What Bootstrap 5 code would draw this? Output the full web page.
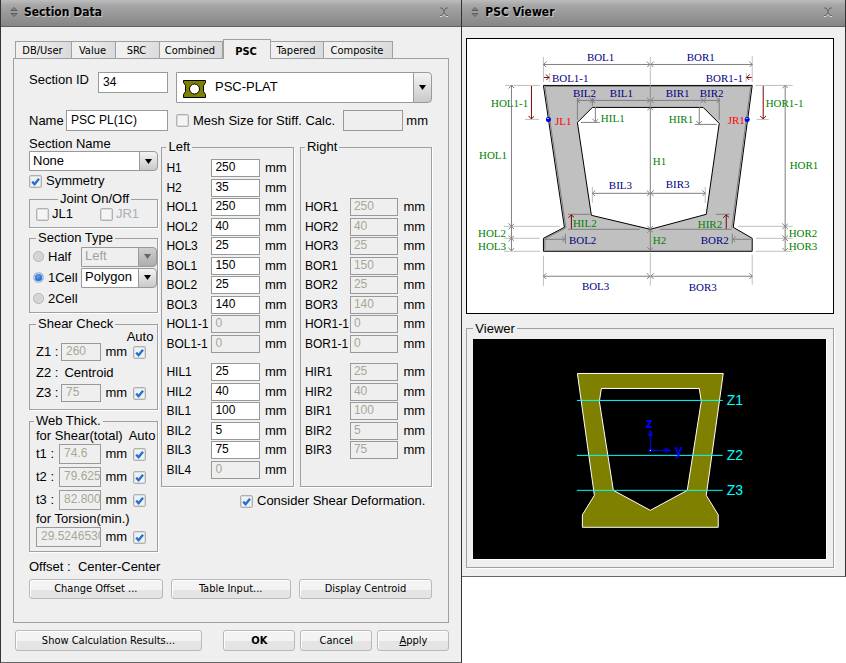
<!DOCTYPE html>
<html lang="en">
<head>
<meta charset="utf-8">
<meta name="viewport" content="width=device-width, initial-scale=1">
<title>Section Data</title>
<link href="https://cdn.jsdelivr.net/npm/bootstrap@5.3.0/dist/css/bootstrap.min.css" rel="stylesheet">
<style>
  :root { --face: #efefef; --edge: #a0a0a0; }
  body { font: 13px/16px "Liberation Sans", Arial, sans-serif; color: #000; background: #fff; }
  .win { background: var(--face); border: 1px solid #333; border-top: 0; min-width: 0; }
  .win-data { flex: 462 1 0; border-bottom-color: #666; }
  .win-view { flex: 384 1 0; border-left: 0; border-bottom-color: #666; }
  .titlebar { height: 27px; padding: 0 12px 3px 8px; border-bottom: 1px solid #606060;
    background: linear-gradient(#bdbdbd 0, #a6a6a6 20%, #9a9a9a 50%, #858585 100%); }
  .titlebar h1 { font: bold 12px/16px "DejaVu Sans Condensed", "DejaVu Sans", Tahoma, sans-serif; margin: 0 0 0 5px; text-shadow: 1px 1px 0 #ccc; }
  .titlebar button { border: 0; background: none; padding: 0; line-height: 0; }

  .ui, .nav-tabs .nav-link { font: 11px/14px "DejaVu Sans Condensed", "DejaVu Sans", Tahoma, sans-serif; color: #000; }
  .nav-tabs { border: 0; padding-left: 2px; }
  .nav-tabs .nav-link { height: 17px; padding: 1px 2px 0 0; border: 1px solid var(--edge); border-left-width: 0; border-bottom: 0; border-radius: 0;
    background: linear-gradient(100deg, #f0f0f0 30%, #d8d9db); margin: 0; white-space: nowrap; }
  .nav-tabs .nav-item:first-child .nav-link { border-left-width: 1px; }
  .nav-tabs .nav-link.active { height: 20px; margin-bottom: -1px; border: 1px solid var(--edge); border-bottom: 0; background: var(--face); color: #000; font-weight: bold; padding-top: 4px; position: relative; }
  .t1 { width: 57px; } .t2 { width: 44px; } .t3 { width: 63px; } .t4 { width: 48px; } .t5 { width: 53px; } .t6 { width: 69px; }
  .panel { border: 1px solid var(--edge); padding: 13px 16px 23px 15px; }

  .box { height: 20px; padding: 0 0 2px 4px; border: 1px solid #999; outline: 0;
    border-radius: 0; background: #fff; color: #000; font-size: 12px; line-height: 14px; min-width: 0; width: 100%; }
  .box:disabled { background: var(--face); color: #a8a797; }
  .tall { height: 21px; }
  .dd { appearance: none; height: 20px; border: 1px solid #999; border-radius: 0 4px 4px 0; padding: 0 20px 1px 3px; color: #000; font-size: 13px; line-height: 16px; width: 100%;
    background: url("data:image/svg+xml,%3Csvg xmlns='http://www.w3.org/2000/svg' width='18' height='7'%3E%3Cpath d='M6 1h7l-3.500 5z'/%3E%3C/svg%3E") right center / 18px 7px no-repeat,
      linear-gradient(#999, #999) right 17px top / 1px 100% no-repeat,
      linear-gradient(#f4f4f4, #c9c9c9) right / 17px 100% no-repeat, #fff; }
  .dd:disabled { color: #a0a0a0; opacity: 1;
    background: url("data:image/svg+xml,%3Csvg xmlns='http://www.w3.org/2000/svg' width='18' height='7'%3E%3Cpath d='M6 1h7l-3.500 5z' fill='%23666'/%3E%3C/svg%3E") right center / 18px 7px no-repeat,
      linear-gradient(#999, #999) right 17px top / 1px 100% no-repeat,
      linear-gradient(#cfcfcf, #adadad) right / 17px 100% no-repeat, var(--face); }
  .dd-big { height: 31px; padding-left: 38px; }
  .shape-icon { left: 7px; top: 8px; pointer-events: none; }

  .ck { appearance: none; width: 13px; height: 13px; margin: 0; flex: none; border: 1px solid #b0b0b0; border-radius: 2px; background: #f4f4f4; box-shadow: inset 0 0 0 1px #dcdcdc; }
  .ck:checked { background: #eef3fa url("data:image/svg+xml,%3Csvg xmlns='http://www.w3.org/2000/svg' viewBox='0 0 11 11'%3E%3Cpath d='M2.200 5.600l2.400 2.600 4.400-5.400' fill='none' stroke='%232a6fcb' stroke-width='2.400'/%3E%3C/svg%3E") center / 11px 11px no-repeat; }
  .ck[type=radio] { width: 11px; height: 11px; border-radius: 50%; background: #d4d4d4; }
  .ck[type=radio]:checked { background: radial-gradient(circle at 45% 40%, #64a5ee, #1c63c4 60%); border-color: #a9bdd6; box-shadow: inset 0 0 0 1px #cfdff3; }

  fieldset { border: 1px solid var(--edge); box-shadow: 1px 1px 0 #fff; padding: 0 4px; }
  legend { float: none; width: auto; margin: 0; padding: 0 2px; font-size: 13px; line-height: 14px; }

  .col-top { width: 139px; flex: none; }
  .lab-id { width: 69px; flex: none; white-space: nowrap; } .lab-nm { width: 37px; flex: none; }
  .shape { margin-left: 8px; min-width: 0; }
  .row-name { margin-top: 7px; margin-bottom: 5px; }
  .mesh-box { width: 60px; flex: none; } .mesh-unit { width: 29px; padding-left: 3px; }

  .cols { gap: 3px; } .lh-sname { line-height: 15px; }
  .col-a { flex: 129 1 0; min-width: 0; } .col-b { flex: 270 1 0; min-width: 0; }
  .sym { margin: 2px 0 3px; }
  .joint { padding-bottom: 5px; margin-bottom: 3px; } .joint legend { margin-left: 24px; }
  .joint-line { height: 16px; padding-left: 2px; } .joint-line label { margin-left: 3px; } .ck.jr { margin-left: 27px; } .dim { color: #a9b0b8; }
  .stype { padding: 1px 0 3px 3px; margin-bottom: 4px; } .stype legend { margin-left: 3px; }
  .stype .line { height: 21px; }
  .stype .rl { width: 37px; flex: none; padding-left: 4px; white-space: nowrap; }
  .shear { padding: 0 11px 7px 6px; margin-bottom: 4px; } .web { padding: 0 11px 4px 6px; }
  .web legend { margin-left: -2px; }
  .key { width: 25px; flex: none; } .key-t { width: 23px; flex: none; }
  .unit { width: 32px; flex: none; padding-left: 4px; }
  .h18 { height: 18px; } .auto { line-height: 12px; margin-right: -7px; }
  .z2 { line-height: 19px; margin: 2px 0; } .cen { margin-left: 6px; }
  .shear-head { margin-right: -9px; }
  .thick { gap: 3px; }
  .tor-label { margin-top: 1px; }

  .pair { gap: 6px; padding-top: 4px; } .side { flex: 1 1 0; padding: 5px 0 7px 4px; }
  .dims { display: grid; grid-template-columns: 45px 1fr 33px; grid-template-rows: repeat(10, 1fr) 8px repeat(6, 1fr); row-gap: 1px; min-height: 320px; align-items: center; }
  .dims label { font-size: 12px; white-space: nowrap; }
  .dims .box { height: 18px; padding-left: 3px; } .dims span { padding-left: 5px; }
  .dims .skip2 { grid-row: 1 / 3; grid-column: 1 / -1; } .dims .skip { grid-column: 1 / -1; }
  .consider { margin: 6px 7px 0 0; }
  .offset-line { margin-top: 7px; }

  .btn-x { height: 20px; padding: 0; border: 1px solid #b9b9b9; border-radius: 3px; box-shadow: inset 1px 1px 0 #fff; background: linear-gradient(#f3f3f3 0 55%, #e4e4e4 55% 100%); }
  .w1 { flex: 135 1 0; } .w2 { flex: 121 1 0; }
  .foot { gap: 5px; padding: 7px 0 11px 2px; } .f1 { flex: 187 1 0; max-width: 187px; } .f2 { width: 72px; }
  .foot .btn-x { height: 21px; }

  .view-body { padding: 11px 11px 8px 4px; }
  .view-set { margin-top: 8px; padding: 3px 6px 7px; }
  .drawing { border: 1px solid #000; background: #fff; }
  .drawing svg, .scene svg { display: block; width: 100%; height: auto; }
  .drawing text { font: 11px "Liberation Serif", serif; }
  .scene { background: #000; border: 1px solid #fff; border-width: 0 1px 1px 0; }
</style>
<script src="https://cdn.jsdelivr.net/npm/bootstrap@5.3.0/dist/js/bootstrap.bundle.min.js" defer></script>
</head>
<body>
<main class="d-flex align-items-start">

<section class="win win-data" aria-label="Section Data">
  <header class="titlebar d-flex align-items-center">
    <svg width="10" height="12" viewBox="0 0 10 12" aria-hidden="true"><path d="M2 4.500L5 1.500l3 3zM2 7.500l3 3 3-3z" fill="#888" stroke="#5c5c5c"/></svg>
    <h1>Section Data</h1>
    <button class="ms-auto" type="button" aria-label="Close"><svg width="10" height="10" viewBox="0 0 10 10"><path d="M1 9.500h2l2-2 2 2h2" stroke="#ddd" fill="none"/><path d="M1 1h2l2 3 2-3h2M1 8.500h2l2-3 2 3h2M5 4v2" stroke="#666" fill="none"/></svg></button>
  </header>
  <div class="px-2 mx-1">
    <ul class="nav nav-tabs flex-nowrap align-items-end pt-2 mt-1" role="tablist">
      <li class="nav-item"><button class="nav-link t1" type="button" role="tab">DB/User</button></li>
      <li class="nav-item"><button class="nav-link t2" type="button" role="tab">Value</button></li>
      <li class="nav-item"><button class="nav-link t2" type="button" role="tab">SRC</button></li>
      <li class="nav-item"><button class="nav-link t3" type="button" role="tab">Combined</button></li>
      <li class="nav-item"><button class="nav-link t4 active" type="button" role="tab" aria-selected="true">PSC</button></li>
      <li class="nav-item"><button class="nav-link t5" type="button" role="tab">Tapered</button></li>
      <li class="nav-item"><button class="nav-link t6" type="button" role="tab">Composite</button></li>
    </ul>
    <div class="panel">
      <div class="d-flex">
        <div class="d-flex col-top">
          <label for="sid" class="lab-id">Section ID</label><input id="sid" class="box tall" value="34">
        </div>
        <div class="position-relative flex-grow-1 shape">
          <svg class="shape-icon position-absolute" width="23" height="18" viewBox="0 0 23 18" aria-hidden="true"><path d="M.5.5h22v2l-2 3v6l2 3v3H.5v-3l2-3v-6l-2-3z" fill="#808000" stroke="#000"/><circle cx="11.500" cy="9" r="5" fill="#fff" stroke="#000"/></svg>
          <select class="dd dd-big" aria-label="Section shape"><option>PSC-PLAT</option></select>
        </div>
      </div>
      <div class="d-flex row-name align-items-center">
        <div class="d-flex col-top align-items-center"><label for="nm" class="lab-nm">Name</label><input id="nm" class="box tall" value="PSC PL(1C)"></div>
        <div class="shape d-flex align-items-center flex-grow-1">
          <input type="checkbox" class="ck" id="mesh"><label for="mesh" class="ms-1 text-nowrap">Mesh Size for Stiff. Calc.</label>
          <input class="box tall mesh-box ms-auto" aria-label="Mesh size" disabled><span class="mesh-unit">mm</span>
        </div>
      </div>

      <div class="d-flex cols">
        <div class="col-a">
          <label for="sname" class="d-block lh-sname">Section Name</label>
          <select id="sname" class="dd d-block"><option>None</option></select>
          <div class="d-flex align-items-center sym"><input type="checkbox" class="ck" id="sym" checked><label for="sym" class="ms-1">Symmetry</label></div>
          <fieldset class="joint"><legend>Joint On/Off</legend>
            <div class="d-flex align-items-center joint-line">
              <input type="checkbox" class="ck" id="jl"><label for="jl">JL1</label>
              <input type="checkbox" class="ck jr" id="jr" disabled><label for="jr" class="dim">JR1</label>
            </div>
          </fieldset>
          <fieldset class="stype"><legend>Section Type</legend>
            <div class="line d-flex align-items-center"><input type="radio" name="st" class="ck" id="half"><label for="half" class="rl">Half</label><select class="dd" aria-label="Half side" disabled><option>Left</option></select></div>
            <div class="line d-flex align-items-center"><input type="radio" name="st" class="ck" id="c1" checked><label for="c1" class="rl">1Cell</label><select class="dd" aria-label="Cell shape"><option>Polygon</option></select></div>
            <div class="line d-flex align-items-center"><input type="radio" name="st" class="ck" id="c2"><label for="c2" class="rl">2Cell</label></div>
          </fieldset>
          <fieldset class="shear"><legend>Shear Check</legend>
            <div class="text-end auto">Auto</div>
            <div class="d-flex align-items-center"><label for="z1" class="key">Z1 :</label><input id="z1" class="box h18" value="260" disabled><span class="unit">mm</span><input type="checkbox" class="ck" aria-label="Z1 auto" checked></div>
            <div class="z2"><span>Z2 :</span><span class="cen">Centroid</span></div>
            <div class="d-flex align-items-center"><label for="z3" class="key">Z3 :</label><input id="z3" class="box h18" value="75" disabled><span class="unit">mm</span><input type="checkbox" class="ck" aria-label="Z3 auto" checked></div>
          </fieldset>
          <fieldset class="web"><legend>Web Thick.</legend>
            <div class="d-flex justify-content-between shear-head"><span class="text-nowrap">for Shear(total)</span><span>Auto</span></div>
            <div class="d-grid thick">
              <div class="d-flex align-items-center"><label for="w1" class="key-t">t1 :</label><input id="w1" class="box" value="74.6" disabled><span class="unit">mm</span><input type="checkbox" class="ck" aria-label="t1 auto" checked></div>
              <div class="d-flex align-items-center"><label for="w2" class="key-t">t2 :</label><input id="w2" class="box" value="79.625" disabled><span class="unit">mm</span><input type="checkbox" class="ck" aria-label="t2 auto" checked></div>
              <div class="d-flex align-items-center"><label for="w3" class="key-t">t3 :</label><input id="w3" class="box" value="82.8000" disabled><span class="unit">mm</span><input type="checkbox" class="ck" aria-label="t3 auto" checked></div>
            </div>
            <label for="tor" class="d-block text-nowrap tor-label">for Torsion(min.)</label>
            <div class="d-flex align-items-center"><input id="tor" class="box" value="29.5246530" disabled><span class="unit">mm</span><input type="checkbox" class="ck" aria-label="Torsion auto" checked></div>
          </fieldset>
        </div>

        <div class="col-b">
          <div class="d-flex pair">
            <fieldset class="side"><legend>Left</legend>
              <div class="dims">
                <label for="a1">H1</label><input id="a1" class="box" value="250"><span>mm</span>
                <label for="a2">H2</label><input id="a2" class="box" value="35"><span>mm</span>
                <label for="a3">HOL1</label><input id="a3" class="box" value="250"><span>mm</span>
                <label for="a4">HOL2</label><input id="a4" class="box" value="40"><span>mm</span>
                <label for="a5">HOL3</label><input id="a5" class="box" value="25"><span>mm</span>
                <label for="a6">BOL1</label><input id="a6" class="box" value="150"><span>mm</span>
                <label for="a7">BOL2</label><input id="a7" class="box" value="25"><span>mm</span>
                <label for="a8">BOL3</label><input id="a8" class="box" value="140"><span>mm</span>
                <label for="a9">HOL1-1</label><input id="a9" class="box" value="0" disabled><span>mm</span>
                <label for="a10">BOL1-1</label><input id="a10" class="box" value="0" disabled><span>mm</span>
                <div class="skip"></div>
                <label for="a11">HIL1</label><input id="a11" class="box" value="25"><span>mm</span>
                <label for="a12">HIL2</label><input id="a12" class="box" value="40"><span>mm</span>
                <label for="a13">BIL1</label><input id="a13" class="box" value="100"><span>mm</span>
                <label for="a14">BIL2</label><input id="a14" class="box" value="5"><span>mm</span>
                <label for="a15">BIL3</label><input id="a15" class="box" value="75"><span>mm</span>
                <label for="a16">BIL4</label><input id="a16" class="box" value="0" disabled><span>mm</span>
              </div>
            </fieldset>
            <fieldset class="side"><legend>Right</legend>
              <div class="dims">
                <div class="skip2"></div>
                <label for="b3">HOR1</label><input id="b3" class="box" value="250" disabled><span>mm</span>
                <label for="b4">HOR2</label><input id="b4" class="box" value="40" disabled><span>mm</span>
                <label for="b5">HOR3</label><input id="b5" class="box" value="25" disabled><span>mm</span>
                <label for="b6">BOR1</label><input id="b6" class="box" value="150" disabled><span>mm</span>
                <label for="b7">BOR2</label><input id="b7" class="box" value="25" disabled><span>mm</span>
                <label for="b8">BOR3</label><input id="b8" class="box" value="140" disabled><span>mm</span>
                <label for="b9">HOR1-1</label><input id="b9" class="box" value="0" disabled><span>mm</span>
                <label for="b10">BOR1-1</label><input id="b10" class="box" value="0" disabled><span>mm</span>
                <div class="skip"></div>
                <label for="b11">HIR1</label><input id="b11" class="box" value="25" disabled><span>mm</span>
                <label for="b12">HIR2</label><input id="b12" class="box" value="40" disabled><span>mm</span>
                <label for="b13">BIR1</label><input id="b13" class="box" value="100" disabled><span>mm</span>
                <label for="b14">BIR2</label><input id="b14" class="box" value="5" disabled><span>mm</span>
                <label for="b15">BIR3</label><input id="b15" class="box" value="75" disabled><span>mm</span>
              </div>
            </fieldset>
          </div>
          <div class="d-flex align-items-center justify-content-end consider"><input type="checkbox" class="ck" id="csd" checked><label for="csd" class="ms-1">Consider Shear Deformation.</label></div>
        </div>
      </div>

      <div class="offset-line">Offset :&nbsp; Center-Center</div>
      <div class="d-flex gap-2 mt-1">
        <button type="button" class="btn-x ui w1">Change Offset ...</button>
        <button type="button" class="btn-x ui w2">Table Input...</button>
        <button type="button" class="btn-x ui w1">Display Centroid</button>
      </div>
    </div>
    <div class="foot d-flex">
      <button type="button" class="btn-x ui f1">Show Calculation Results...</button>
      <button type="button" class="btn-x ui f2 fw-bold ms-auto">OK</button>
      <button type="button" class="btn-x ui f2">Cancel</button>
      <button type="button" class="btn-x ui f2"><u>A</u>pply</button>
    </div>
  </div>
</section>

<section class="win win-view" aria-label="PSC Viewer">
  <header class="titlebar d-flex align-items-center">
    <svg width="10" height="12" viewBox="0 0 10 12" aria-hidden="true"><path d="M2 4.500L5 1.500l3 3zM2 7.500l3 3 3-3z" fill="#888" stroke="#5c5c5c"/></svg>
    <h1>PSC Viewer</h1>
    <button class="ms-auto" type="button" aria-label="Close"><svg width="10" height="10" viewBox="0 0 10 10"><path d="M1 9.500h2l2-2 2 2h2" stroke="#ddd" fill="none"/><path d="M1 1h2l2 3 2-3h2M1 8.500h2l2-3 2 3h2M5 4v2" stroke="#666" fill="none"/></svg></button>
  </header>
  <div class="view-body">
    <div class="drawing">
      <svg viewBox="467 39 366 274" role="img" aria-label="Section dimension diagram">
        <defs>
          <marker id="ar" viewBox="0 0 6 6" refX="5" refY="3" markerWidth="6" markerHeight="6" orient="auto-start-reverse" markerUnits="userSpaceOnUse"><path d="M2 0l3 3-3 3" fill="none" stroke="#808080"/></marker>
          <marker id="rd" viewBox="0 0 6 6" refX="5" refY="3" markerWidth="6" markerHeight="6" orient="auto" markerUnits="userSpaceOnUse"><path d="M2 0l3 3-3 3" fill="none" stroke="#800000"/></marker>
        </defs>
        <path d="M543.500 85.500H752.500L733.500 227.500L752.500 238.500V251.500H543.500V238.500L564.500 227.500ZM592.500 107.500L577.500 122.500L591.500 215.500L650.500 229.500L706.500 214.500L719.500 123.500L703.500 107.500Z" fill="#c0c0c0" fill-rule="evenodd" stroke="#000"/>
        <path d="M545 86.500H751M545 87L566 228L545 239V250M751 87L732 228" fill="none" stroke="#808080"/>
        <path d="M543.500 57V82M752.500 56V82M650.500 57V85M549.500 73V82M746.500 73V82M505 85.500H540M756 85.500H793M525 119.500H539M757 119.500H769M504 226.500H560M738 226.500H793M504 238.500H540M756 238.500H793M504 251.500H540M756 251.500H793M543.500 256V286M752.500 255V285M650.500 253V286M592.500 187V203M705.500 187V203" stroke="#c0c0c0" fill="none"/>
        <path d="M577.500 98V120M592.500 98V106M719.500 98V120M581 122.500H600M695 124.500H717M568 214.500H590M716 214.500H730M568 229.500H640M660 229.500H732M565.500 234V244M732.500 234V244" stroke="#808080" fill="none"/>
        <g stroke="#808080">
          <path marker-start="url(#ar)" marker-end="url(#ar)" d="M543.500 64.500H650"/><path marker-start="url(#ar)" marker-end="url(#ar)" d="M651 64.500H752.500"/>
          <path marker-start="url(#ar)" marker-end="url(#ar)" d="M577.500 100.500H592.500"/><path marker-start="url(#ar)" marker-end="url(#ar)" d="M592.500 100.500H650"/>
          <path marker-start="url(#ar)" marker-end="url(#ar)" d="M651 100.500H703.500"/><path marker-start="url(#ar)" marker-end="url(#ar)" d="M703.500 100.500H719.500"/>
          <path marker-end="url(#ar)" d="M595.500 107V122"/><path marker-end="url(#ar)" d="M699.500 107V124"/>
          <path marker-start="url(#ar)" marker-end="url(#ar)" d="M650.500 107.500V229"/><path marker-start="url(#ar)" marker-end="url(#ar)" d="M650.500 230V250.500"/>
          <path marker-start="url(#ar)" marker-end="url(#ar)" d="M511.500 85.500V226.500"/><path marker-start="url(#ar)" marker-end="url(#ar)" d="M785.500 85.500V226.500"/>
          <path marker-start="url(#ar)" marker-end="url(#ar)" d="M511.500 226.500V238.500"/><path marker-start="url(#ar)" marker-end="url(#ar)" d="M785.500 226.500V238.500"/>
          <path marker-start="url(#ar)" marker-end="url(#ar)" d="M511.500 238.500V251"/><path marker-start="url(#ar)" marker-end="url(#ar)" d="M785.500 238.500V251"/>
          <path marker-start="url(#ar)" marker-end="url(#ar)" d="M592.500 193.500H650"/><path marker-start="url(#ar)" marker-end="url(#ar)" d="M651 193.500H705.500"/>
          <path marker-end="url(#ar)" d="M545 239.500H565"/><path marker-end="url(#ar)" d="M751 239.500H733"/>
          <path marker-start="url(#ar)" marker-end="url(#ar)" d="M543.500 276.500H650"/><path marker-start="url(#ar)" marker-end="url(#ar)" d="M651 276.500H752.500"/>
        </g>
        <g stroke="#800000">
          <path marker-end="url(#rd)" d="M544 77.500H549"/><path marker-end="url(#rd)" d="M752 77.500H747"/>
          <path marker-end="url(#rd)" d="M531.500 86V119"/><path marker-end="url(#rd)" d="M763.500 86V119"/>
          <path marker-end="url(#rd)" d="M571.500 229V215"/><path marker-end="url(#rd)" d="M726.500 229V215"/>
        </g>
        <path d="M650.500 85V107" stroke="#909090"/>
        <g fill="#0000f0"><circle cx="548.500" cy="119.500" r="2.500"/><circle cx="747.500" cy="119.500" r="2.500"/></g>
        <g fill="#40e0ff"><path d="M547 118h2v1h-2zM746 118h2v1h-2z"/></g>
        <g fill="#000080">
          <text x="587" y="61">BOL1</text><text x="687" y="61">BOR1</text><text x="552" y="82">BOL1-1</text><text x="706" y="82">BOR1-1</text>
          <text x="573" y="97">BIL2</text><text x="610" y="97">BIL1</text><text x="666" y="97">BIR1</text><text x="700" y="97">BIR2</text>
          <text x="609" y="189">BIL3</text><text x="666" y="188">BIR3</text><text x="569" y="244">BOL2</text><text x="701" y="244">BOR2</text>
          <text x="582" y="290">BOL3</text><text x="689" y="291">BOR3</text>
        </g>
        <g fill="#008000">
          <text x="491" y="107">HOL1-1</text><text x="766" y="107">HOR1-1</text><text x="601" y="122">HIL1</text><text x="669" y="123">HIR1</text>
          <text x="479" y="159">HOL1</text><text x="790" y="169">HOR1</text><text x="653" y="165">H1</text><text x="573" y="227">HIL2</text><text x="698" y="228">HIR2</text>
          <text x="653" y="244">H2</text><text x="478" y="237">HOL2</text><text x="478" y="250">HOL3</text><text x="789" y="237">HOR2</text><text x="789" y="250">HOR3</text>
        </g>
        <g fill="#f00"><text x="555" y="125">JL1</text><text x="728" y="124">JR1</text></g>
      </svg>
    </div>
    <fieldset class="view-set"><legend>Viewer</legend>
      <div class="scene">
        <svg viewBox="473 339 353 221" role="img" aria-label="Section preview">
          <path d="M577.500 373.500H723.500L706.500 495.500L718.500 515V527.500H582.500V515L594.500 495.500ZM601.500 388.500L599.500 401.500L613.500 490.500L650.500 510.500L687.500 490.500L701.500 401.500L699.500 388.500Z" fill="#808000" fill-rule="evenodd" stroke="#fff"/>
          <path d="M577 400.500H723M577 455.500H723M577 490.500H723" stroke="#0ff"/>
          <path d="M650.500 450V431M652 450.500H670M648.500 435.500L650.500 430.500L652.500 435.500ZM665.500 448.500L670.500 450.500L665.500 452.500Z" stroke="#00f" fill="none"/>
          <path d="M649 449h3v3h-3z" fill="#00f"/><path d="M650 450h1v1h-1z" fill="#fff"/>
          <g font-family="Liberation Sans, sans-serif" font-size="14" fill="#0ff"><text x="727" y="405">Z1</text><text x="727" y="460">Z2</text><text x="727" y="495">Z3</text>
            <text x="646" y="428" fill="#00f" font-weight="bold">z</text><text x="675" y="455" fill="#00f" font-weight="bold">y</text></g>
        </svg>
      </div>
    </fieldset>
  </div>
</section>
</main>
</body>
</html>
